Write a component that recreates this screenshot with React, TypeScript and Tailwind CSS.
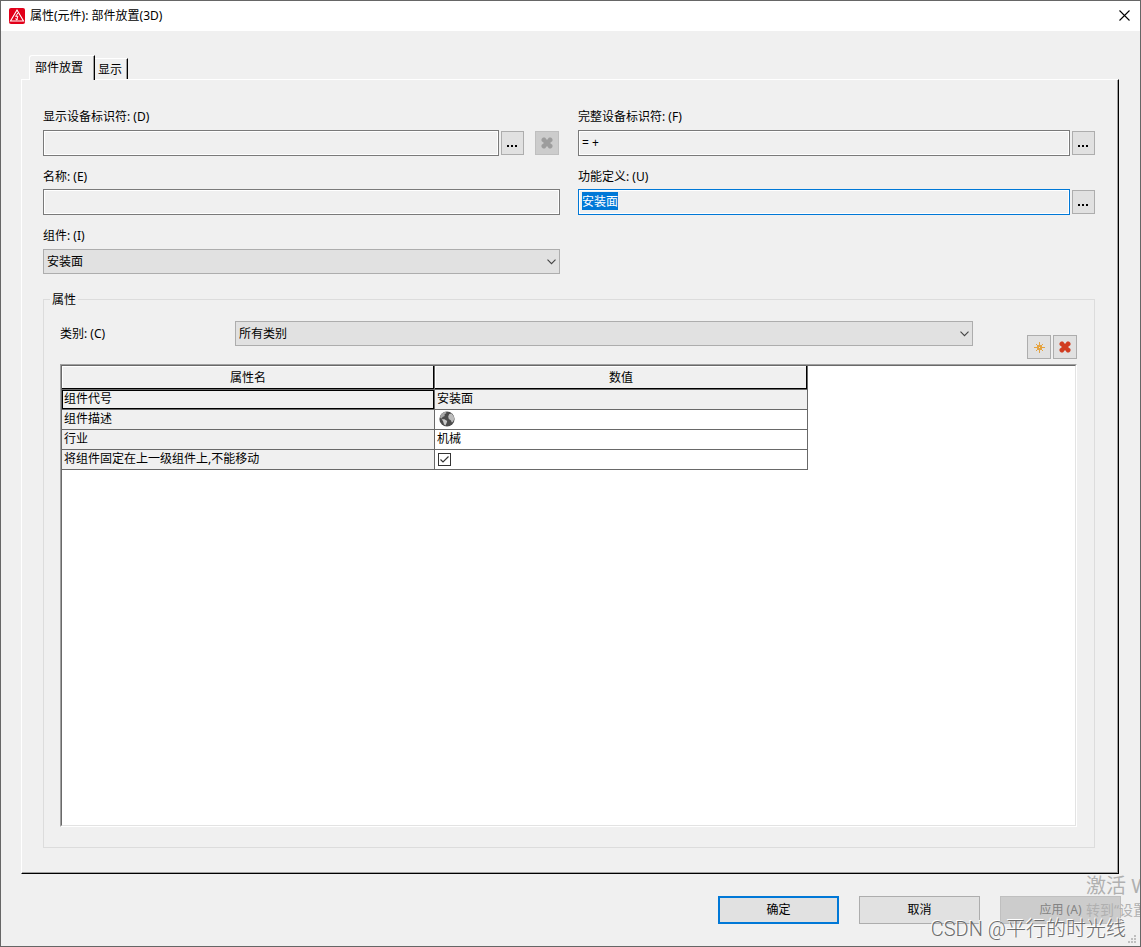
import React, { useEffect, useRef, useState } from "react";

const tabs = ["部件放置", "显示"];

const inputClass =
  "h-[26px] w-full min-w-0 flex-1 border border-[#7a7a7a] bg-[#f0f0f0] px-[3px] pb-0.5 leading-[17px] shadow-[inset_0_0_0_1px_#fff] outline-none focus:border-[#0078d7] selection:bg-[#0078d7] selection:text-white";

const labelClass = "mb-1 block";

const dialogButton = "h-7 w-[121px] border";

const AppIcon = () => (
  <svg width="16" height="16" viewBox="0 0 16 16" className="shrink-0">
    <rect width="16" height="16" rx="2" fill="#e2001a" />
    <path d="M8 2 L14.5 13 H1.5 Z" fill="none" stroke="#fff" strokeWidth="1.1" />
    <path d="M9 4.8 L6.6 8.4 L8.9 8.2 L7.6 11.8 M6.7 10.4 L7.5 12 L8.9 10.9" fill="none" stroke="#fff" strokeWidth="1" />
  </svg>
);

const CrossIcon = ({ color }: { color: string }) => (
  <svg width="12" height="12" viewBox="0 0 12 12">
    <path
      d="M2 0.5 H4 L6 3 L8 0.5 H10 L11.5 2 V4 L9 6 L11.5 8 V10 L10 11.5 H8 L6 9 L4 11.5 H2 L0.5 10 V8 L3 6 L0.5 4 V2 Z"
      fill={color}
    />
  </svg>
);

const NewIcon = () => (
  <svg width="11" height="11" viewBox="0 0 11 11" shapeRendering="crispEdges" fill="#e5a340">
    <path d="M5 0h1v11h-1z M0 5h11v1h-11z M3 3h5v5h-5z M2 2h1v1h-1z M8 2h1v1h-1z M2 8h1v1h-1z M8 8h1v1h-1z" />
    <path d="M5 5h1v1h-1z" fill="#e1e1e1" />
  </svg>
);

const GlobeIcon = () => (
  <svg width="16" height="16" viewBox="0 0 16 16">
    <circle cx="8" cy="8" r="7.6" fill="#4c4c4c" />
    <path d="M1.2 5 C2 2.8 4 1.2 6.6 0.8 L7.6 2 L5.4 3.4 L5.8 5 L3.6 6 L2.6 7.6 L1.2 7 Z" fill="#a8a8a8" />
    <path d="M2.6 8.2 L5.4 8.2 L8.2 10 L7.6 12 L6.4 14.4 C5.4 14 4.8 13.2 4.6 12 L4 10 Z" fill="#c8c8c8" />
    <path d="M10.2 3 L12.6 2.6 L14.8 5.4 L15.2 8 L14 10.8 L12.8 11.6 L11.8 9.2 L9.8 8 L9.2 5.6 Z" fill="#bcbcbc" />
  </svg>
);

const MoreButton = ({ label }: { label: string }) => (
  <button aria-label={label} className="flex h-6 w-[23px] shrink-0 items-center justify-center border border-[#adadad] bg-[#e1e1e1] pt-1.5 pr-px">
    <svg width="10" height="2" viewBox="0 0 10 2" shapeRendering="crispEdges">
      <path d="M0 0h2v2h-2z M4 0h2v2h-2z M8 0h2v2h-2z" />
    </svg>
  </button>
);

const Select = ({ id, value }: { id: string; value: string }) => (
  <div className="relative flex-1">
    <select id={id} className="block h-[25px] w-full appearance-none border border-[#adadad] bg-[#e1e1e1] px-[3px] leading-4 outline-none">
      <option>{value}</option>
    </select>
    <svg width="9" height="6" viewBox="0 0 9 6" className="pointer-events-none absolute top-2.5 right-1">
      <path d="M0.5 0.7 L4.5 4.7 L8.5 0.7" fill="none" stroke="#444" strokeWidth="1.1" />
    </svg>
  </div>
);

const App = () => {
  const definitionRef = useRef<HTMLInputElement>(null);
  const [activeTab, setActiveTab] = useState(tabs[0]);
  const [fixed, setFixed] = useState(true);

  useEffect(() => {
    definitionRef.current?.focus();
    definitionRef.current?.select();
  }, []);

  const nameCell = "border-r border-b border-[#696969] bg-[#f0f0f0] px-0.5 pt-0 pb-0.5";
  const valueCell = "border-r border-b border-[#696969] px-0.5 pt-0 pb-0.5";
  const headCell =
    "h-6 border-r border-b border-[#696969] bg-[#f0f0f0] p-0 font-normal shadow-[inset_-1px_-1px_0_#000,inset_1px_1px_0_#fff]";

  return (
    <div className="relative flex min-h-screen flex-col overflow-hidden border border-[#666] bg-[#f0f0f0] font-['Noto_Sans','Noto_Sans_CJK_SC',sans-serif] text-xs leading-4 text-black">
      <header className="flex h-[30px] items-center bg-white pr-2.5 pl-2">
        <AppIcon />
        <h1 className="ml-[5px]">属性(元件): 部件放置(3D)</h1>
        <button aria-label="关闭" className="ml-auto pb-0.5">
          <svg width="11" height="11" viewBox="0 0 11 11">
            <path d="M0.5 0.5 L10.5 10.5 M10.5 0.5 L0.5 10.5" stroke="#000" strokeWidth="1.1" />
          </svg>
        </button>
      </header>

      <main className="flex flex-1 flex-col pt-6 pr-[21px] pl-5">
        <div role="tablist" className="z-10 -mb-px flex items-end pl-2">
          {tabs.map((tab) => (
            <button
              key={tab}
              role="tab"
              aria-selected={tab === activeTab}
              onClick={() => setActiveTab(tab)}
              className={
                tab === activeTab
                  ? "h-[25px] rounded-tl-[3px] border-t border-r border-l border-t-white border-r-black border-l-white bg-[#f0f0f0] pr-[11px] pl-[5px] shadow-[inset_-1px_0_0_#a0a0a0]"
                  : "mb-px h-[21px] border-t border-r border-t-white border-r-black pt-0.5 pr-[5px] pl-[3px] shadow-[inset_-1px_0_0_#a0a0a0]"
              }
            >
              {tab}
            </button>
          ))}
        </div>

        <section className="flex flex-1 flex-col border border-t-white border-r-black border-b-black border-l-white pt-[29px] pr-[23px] pb-[25px] pl-[21px] shadow-[inset_-1px_-1px_0_#a0a0a0]">
          <div className="grid grid-cols-2 gap-x-[18px] gap-y-[13px]">
            <div>
              <label htmlFor="shown-dt" className="mb-[5px] block">显示设备标识符: (D)</label>
              <div className="flex items-center">
                <input id="shown-dt" className={inputClass} />
                <div className="ml-0.5 flex gap-[11px] pr-px">
                  <MoreButton label="选择显示设备标识符" />
                  <button aria-label="清除" disabled className="flex size-6 items-center justify-center border border-[#bfbfbf] bg-[#ccc]">
                    <CrossIcon color="#9d9d9d" />
                  </button>
                </div>
              </div>
            </div>
            <div>
              <label htmlFor="full-dt" className="mb-[5px] block">完整设备标识符: (F)</label>
              <div className="flex items-center gap-0.5">
                <input id="full-dt" defaultValue="= +" className={inputClass} />
                <MoreButton label="选择完整设备标识符" />
              </div>
            </div>
            <div>
              <label htmlFor="name" className={labelClass}>名称: (E)</label>
              <div className="flex">
                <input id="name" className={inputClass} />
              </div>
            </div>
            <div>
              <label htmlFor="definition" className={labelClass}>功能定义: (U)</label>
              <div className="flex items-center gap-0.5">
                <input id="definition" ref={definitionRef} defaultValue="安装面" className={inputClass} />
                <MoreButton label="选择功能定义" />
              </div>
            </div>
            <div>
              <label htmlFor="component" className="mb-[5px] block">组件: (I)</label>
              <Select id="component" value="安装面" />
            </div>
          </div>

          <div role="group" aria-labelledby="group-title" className="mt-[25px] flex flex-1 flex-col border border-[#dcdcdc] pr-[17px] pb-5 pl-4">
            <h2 id="group-title" className="-mt-2 -ml-2.5 self-start bg-[#f0f0f0] px-0.5">属性</h2>
            <div className="mt-[13px] flex items-start">
              <label htmlFor="category" className="mt-[5px] w-[175px]">类别: (C)</label>
              <Select id="category" value="所有类别" />
              <div className="mt-3.5 mb-[5px] ml-[54px] flex gap-0.5">
                <button aria-label="新建" className="flex size-6 items-center justify-center border border-[#adadad] bg-[#e1e1e1]">
                  <NewIcon />
                </button>
                <button aria-label="删除" className="flex size-6 items-center justify-center border border-[#adadad] bg-[#e1e1e1]">
                  <CrossIcon color="#d13c20" />
                </button>
              </div>
            </div>

            <div className="flex flex-1 flex-col border border-t-[#a0a0a0] border-r-white border-b-white border-l-[#a0a0a0] bg-white">
              <div className="flex-1 border border-t-[#696969] border-r-[#e3e3e3] border-b-[#e3e3e3] border-l-[#696969]">
                <table className="w-[746px] table-fixed border-separate border-spacing-0">
                  <thead>
                    <tr>
                      <th className={headCell}>属性名</th>
                      <th className={headCell}>数值</th>
                    </tr>
                  </thead>
                  <tbody>
                    <tr className="h-5">
                      <td className={nameCell + " shadow-[inset_0_0_0_1px_#000]"}>组件代号</td>
                      <td className={valueCell + " bg-[#f0f0f0]"}>安装面</td>
                    </tr>
                    <tr className="h-5">
                      <td className={nameCell}>组件描述</td>
                      <td className={valueCell}>
                        <div className="pl-0.5">
                          <GlobeIcon />
                        </div>
                      </td>
                    </tr>
                    <tr className="h-5">
                      <td className={nameCell}>行业</td>
                      <td className={valueCell}>机械</td>
                    </tr>
                    <tr className="h-5">
                      <td className={nameCell}>
                        <label htmlFor="fixed">将组件固定在上一级组件上,不能移动</label>
                      </td>
                      <td className={valueCell}>
                        <div className="relative flex pt-0.5 pl-px">
                          <input
                            id="fixed"
                            type="checkbox"
                            checked={fixed}
                            onChange={() => setFixed(!fixed)}
                            className="size-[13px] appearance-none border border-[#333] bg-white"
                          />
                          {fixed && (
                            <svg width="13" height="13" viewBox="0 0 13 13" className="pointer-events-none absolute">
                              <path d="M2.5 6.5 L5 9 L10.5 3.5" fill="none" stroke="#333" strokeWidth="1.2" />
                            </svg>
                          )}
                        </div>
                      </td>
                    </tr>
                  </tbody>
                </table>
              </div>
            </div>
          </div>
        </section>
      </main>

      <footer className="flex justify-end gap-5 py-[22px] pr-[19px]">
        <button className={dialogButton + " border-[#0078d7] bg-[#e1e1e1] shadow-[inset_0_0_0_1px_#0078d7]"}>确定</button>
        <button className={dialogButton + " border-[#adadad] bg-[#e1e1e1]"}>取消</button>
        <button disabled className={dialogButton + " border-[#bfbfbf] bg-[#ccc] text-[#838383]"}>应用 (A)</button>
      </footer>

      {/* resize grip */}
      <svg width="8" height="8" viewBox="0 0 8 8" fill="#bfbfbf" shapeRendering="crispEdges" className="absolute right-1 bottom-[3px]">
        <path d="M6 0h2v2h-2z M3 3h2v2h-2z M6 3h2v2h-2z M0 6h2v2h-2z M3 6h2v2h-2z M6 6h2v2h-2z" />
      </svg>

      {/* watermarks */}
      <div className="pointer-events-none absolute right-0 bottom-6 w-[54px] overflow-hidden whitespace-nowrap text-[#b0b0b0]">
        <p className="text-xl leading-6">激活 W</p>
        <p className="text-sm leading-6">转到“设置</p>
      </div>
      <p className="pointer-events-none absolute right-3.5 bottom-[3px] font-[Roboto,'Noto_Sans_CJK_SC',sans-serif] text-xl leading-7 font-light whitespace-nowrap text-[#6c6c6c] [text-shadow:-1px_-1px_0_#fff]">
        CSDN @平行的时光线
      </p>
    </div>
  );
};

export default App;
